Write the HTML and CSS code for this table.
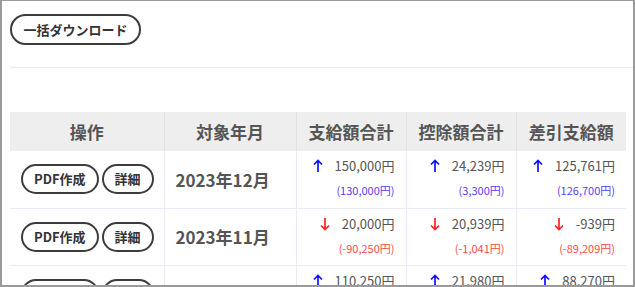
FILE: index.html
```html
<!DOCTYPE html>
<html lang="ja">
<head>
<meta charset="utf-8">
<link rel="stylesheet" href="styles.css">
</head>
<body>
<div class="frame">
  <div class="toolbar">
    <button class="pill pill-lg">一括ダウンロード</button>
  </div>
  <hr class="divider">
  <table class="pay">
    <colgroup>
      <col class="c-op"><col class="c-date"><col class="c-amt"><col class="c-amt"><col class="c-amt">
    </colgroup>
    <thead>
      <tr><th>操作</th><th>対象年月</th><th>支給額合計</th><th>控除額合計</th><th>差引支給額</th></tr>
    </thead>
    <tbody>
      <tr>
        <td class="ops"><button class="pill">PDF作成</button><button class="pill">詳細</button></td>
        <td class="date">2023年12月</td>
        <td class="amt up"><div class="main"><svg class="arr" viewBox="0 0 10 14"><path d="M5 13V1.5M1 5.5L5 1.5L9 5.5"/></svg><span>150,000円</span></div><div class="sub">(130,000円)</div></td>
        <td class="amt up"><div class="main"><svg class="arr" viewBox="0 0 10 14"><path d="M5 13V1.5M1 5.5L5 1.5L9 5.5"/></svg><span>24,239円</span></div><div class="sub">(3,300円)</div></td>
        <td class="amt up"><div class="main"><svg class="arr" viewBox="0 0 10 14"><path d="M5 13V1.5M1 5.5L5 1.5L9 5.5"/></svg><span>125,761円</span></div><div class="sub">(126,700円)</div></td>
      </tr>
      <tr>
        <td class="ops"><button class="pill">PDF作成</button><button class="pill">詳細</button></td>
        <td class="date">2023年11月</td>
        <td class="amt down"><div class="main"><svg class="arr" viewBox="0 0 10 14"><path d="M5 1V12.5M1 8.5L5 12.5L9 8.5"/></svg><span>20,000円</span></div><div class="sub">(-90,250円)</div></td>
        <td class="amt down"><div class="main"><svg class="arr" viewBox="0 0 10 14"><path d="M5 1V12.5M1 8.5L5 12.5L9 8.5"/></svg><span>20,939円</span></div><div class="sub">(-1,041円)</div></td>
        <td class="amt down"><div class="main"><svg class="arr" viewBox="0 0 10 14"><path d="M5 1V12.5M1 8.5L5 12.5L9 8.5"/></svg><span>-939円</span></div><div class="sub">(-89,209円)</div></td>
      </tr>
      <tr>
        <td class="ops"><button class="pill">PDF作成</button><button class="pill">詳細</button></td>
        <td class="date">2023年10月</td>
        <td class="amt up"><div class="main"><svg class="arr" viewBox="0 0 10 14"><path d="M5 13V1.5M1 5.5L5 1.5L9 5.5"/></svg><span>110,250円</span></div><div class="sub">(5,000円)</div></td>
        <td class="amt up"><div class="main"><svg class="arr" viewBox="0 0 10 14"><path d="M5 13V1.5M1 5.5L5 1.5L9 5.5"/></svg><span>21,980円</span></div><div class="sub">(1,200円)</div></td>
        <td class="amt up"><div class="main"><svg class="arr" viewBox="0 0 10 14"><path d="M5 13V1.5M1 5.5L5 1.5L9 5.5"/></svg><span>88,270円</span></div><div class="sub">(3,800円)</div></td>
      </tr>
    </tbody>
  </table>
</div>
</body>
</html>
```
FILE: styles.css
```css
html, body {
  margin: 0;
  padding: 0;
  background: #fff;
}
body {
  font-family: "Noto Sans CJK JP", "Noto Sans", sans-serif;
  color: #555;
}
.frame {
  box-sizing: border-box;
  width: 635px;
  height: 287px;
  overflow: hidden;
  border: 2px solid #9a9a9a;
  border-top-width: 1px;
  padding: 13px 0 0 8px;
}
.toolbar {
  display: flex;
}
.pill {
  font-family: inherit;
  font-weight: 700;
  font-size: 13px;
  color: #333;
  background: #fff;
  border: 2px solid #3c3c3c;
  border-radius: 999px;
  box-sizing: border-box;
  height: 30px;
  padding: 0 11px;
  line-height: 26px;
  cursor: pointer;
}
.pill-lg {
  height: 31px;
  width: 131px;
  padding: 0;
}
.divider {
  border: 0;
  border-top: 1px solid #f3e9dc;
  margin: 22px 0 0 0;
}
.pay {
  margin-top: 44px;
  border-collapse: collapse;
  table-layout: fixed;
  width: 616px;
}
.c-op { width: 154px; }
.c-date { width: 132px; }
.c-amt { width: 110px; }
.pay thead tr { height: 39px; }
.pay th {
  background: #eeeeee;
  padding: 0;
  font-size: 17px;
  font-weight: 700;
  color: #555;
  text-align: center;
  border-left: 1px solid #e2e2e2;
}
.pay th:first-child { border-left: 0; }
.pay tbody tr { height: 57px; }
.pay td {
  border: 1px solid #e8eaf5;
  border-top: 0;
  padding: 0;
  vertical-align: middle;
}
.pay td:first-child { border-left: 0; }
.pay td:last-child { border-right: 0; }
.ops {
  padding-left: 11px !important;
  white-space: nowrap;
}
.ops .pill + .pill { margin-left: 3px; }
.date {
  padding-left: 11px !important;
  font-size: 17px;
  font-weight: 700;
  color: #555;
}
.amt {
  text-align: right;
  padding: 5px 11px 0 0 !important;
  vertical-align: top !important;
}
.amt .main {
  display: flex;
  justify-content: flex-end;
  align-items: center;
  gap: 12px;
  height: 20px;
  font-size: 13px;
  line-height: 20px;
  color: #555;
}
.arr {
  width: 10px;
  height: 14px;
  fill: none;
  stroke-width: 1.7;
}
.up .arr { stroke: #1010ff; }
.down .arr { stroke: #ff2020; }
.amt .sub {
  font-size: 11px;
  line-height: 16px;
  margin-top: 6px;
}
.up .sub { color: #5a3cf0; }
.down .sub { color: #ff4848; }
```
